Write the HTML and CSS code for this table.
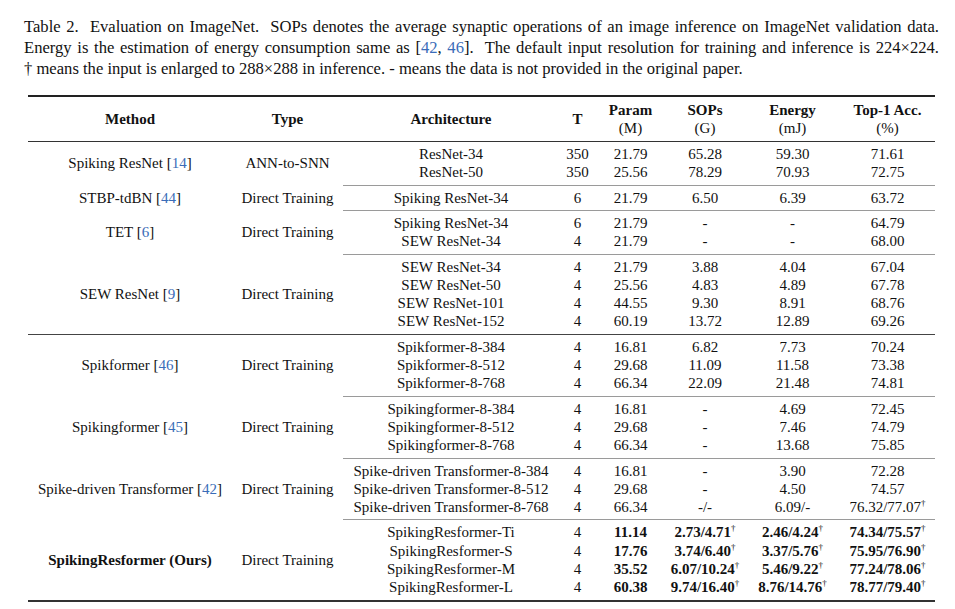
FILE: index.html
```html
<!DOCTYPE html>
<html lang="en">
<head>
    <meta charset="UTF-8">
    <title>Table 2. Evaluation on ImageNet</title>
    <link rel="stylesheet" href="styles.css">
</head>
<body>
    <div class="page">
        <div class="caption">
            <p class="caption-main">Table 2.&nbsp; Evaluation on ImageNet.&nbsp; SOPs denotes the average synaptic operations of an image inference on ImageNet validation data. Energy is the estimation of energy consumption same as [<a href="#">42</a>,&nbsp;<a href="#">46</a>].&nbsp; The default input resolution for training and inference is 224&times;224.</p>
            <p class="caption-note">&dagger; means the input is enlarged to 288&times;288 in inference. - means the data is not provided in the original paper.</p>
        </div>

        <table class="results">
            <colgroup>
                <col class="c-method">
                <col class="c-type">
                <col class="c-arch">
                <col class="c-t">
                <col class="c-param">
                <col class="c-sops">
                <col class="c-energy">
                <col class="c-acc">
            </colgroup>
            <thead>
                <tr>
                    <th>Method</th>
                    <th>Type</th>
                    <th>Architecture</th>
                    <th>T</th>
                    <th>Param<br><span class="unit">(M)</span></th>
                    <th>SOPs<br><span class="unit">(G)</span></th>
                    <th>Energy<br><span class="unit">(mJ)</span></th>
                    <th>Top-1 Acc.<br><span class="unit">(%)</span></th>
                </tr>
            </thead>
            <tbody>
                <tr>
                    <td>Spiking ResNet [<a href="#">14</a>]</td>
                    <td>ANN-to-SNN</td>
                    <td>ResNet-34<br>ResNet-50</td>
                    <td>350<br>350</td>
                    <td>21.79<br>25.56</td>
                    <td>65.28<br>78.29</td>
                    <td>59.30<br>70.93</td>
                    <td>71.61<br>72.75</td>
                </tr>
                <tr class="sub">
                    <td>STBP-tdBN [<a href="#">44</a>]</td>
                    <td>Direct Training</td>
                    <td>Spiking ResNet-34</td>
                    <td>6</td>
                    <td>21.79</td>
                    <td>6.50</td>
                    <td>6.39</td>
                    <td>63.72</td>
                </tr>
                <tr class="sub">
                    <td>TET [<a href="#">6</a>]</td>
                    <td>Direct Training</td>
                    <td>Spiking ResNet-34<br>SEW ResNet-34</td>
                    <td>6<br>4</td>
                    <td>21.79<br>21.79</td>
                    <td>-<br>-</td>
                    <td>-<br>-</td>
                    <td>64.79<br>68.00</td>
                </tr>
                <tr class="sub">
                    <td>SEW ResNet [<a href="#">9</a>]</td>
                    <td>Direct Training</td>
                    <td>SEW ResNet-34<br>SEW ResNet-50<br>SEW ResNet-101<br>SEW ResNet-152</td>
                    <td>4<br>4<br>4<br>4</td>
                    <td>21.79<br>25.56<br>44.55<br>60.19</td>
                    <td>3.88<br>4.83<br>9.30<br>13.72</td>
                    <td>4.04<br>4.89<br>8.91<br>12.89</td>
                    <td>67.04<br>67.78<br>68.76<br>69.26</td>
                </tr>
                <tr class="section">
                    <td>Spikformer [<a href="#">46</a>]</td>
                    <td>Direct Training</td>
                    <td>Spikformer-8-384<br>Spikformer-8-512<br>Spikformer-8-768</td>
                    <td>4<br>4<br>4</td>
                    <td>16.81<br>29.68<br>66.34</td>
                    <td>6.82<br>11.09<br>22.09</td>
                    <td>7.73<br>11.58<br>21.48</td>
                    <td>70.24<br>73.38<br>74.81</td>
                </tr>
                <tr class="sub">
                    <td>Spikingformer [<a href="#">45</a>]</td>
                    <td>Direct Training</td>
                    <td>Spikingformer-8-384<br>Spikingformer-8-512<br>Spikingformer-8-768</td>
                    <td>4<br>4<br>4</td>
                    <td>16.81<br>29.68<br>66.34</td>
                    <td>-<br>-<br>-</td>
                    <td>4.69<br>7.46<br>13.68</td>
                    <td>72.45<br>74.79<br>75.85</td>
                </tr>
                <tr class="sub">
                    <td>Spike-driven Transformer [<a href="#">42</a>]</td>
                    <td>Direct Training</td>
                    <td>Spike-driven Transformer-8-384<br>Spike-driven Transformer-8-512<br>Spike-driven Transformer-8-768</td>
                    <td>4<br>4<br>4</td>
                    <td>16.81<br>29.68<br>66.34</td>
                    <td>-<br>-<br>-/-</td>
                    <td>3.90<br>4.50<br>6.09/-</td>
                    <td>72.28<br>74.57<br>76.32/77.07<sup>&dagger;</sup></td>
                </tr>
                <tr class="sub">
                    <td><b>SpikingResformer (Ours)</b></td>
                    <td>Direct Training</td>
                    <td>SpikingResformer-Ti<br>SpikingResformer-S<br>SpikingResformer-M<br>SpikingResformer-L</td>
                    <td>4<br>4<br>4<br>4</td>
                    <td class="best">11.14<br>17.76<br>35.52<br>60.38</td>
                    <td class="best">2.73/4.71<sup>&dagger;</sup><br>3.74/6.40<sup>&dagger;</sup><br>6.07/10.24<sup>&dagger;</sup><br>9.74/16.40<sup>&dagger;</sup></td>
                    <td class="best">2.46/4.24<sup>&dagger;</sup><br>3.37/5.76<sup>&dagger;</sup><br>5.46/9.22<sup>&dagger;</sup><br>8.76/14.76<sup>&dagger;</sup></td>
                    <td class="best">74.34/75.57<sup>&dagger;</sup><br>75.95/76.90<sup>&dagger;</sup><br>77.24/78.06<sup>&dagger;</sup><br>78.77/79.40<sup>&dagger;</sup></td>
                </tr>
            </tbody>
        </table>
    </div>
</body>
</html>
```

FILE: styles.css
```css
body {
    margin: 0;
    background: #fff;
    color: #111;
    font-family: "Liberation Serif", "Times New Roman", serif;
}
.page {
    width: 915px;
    padding: 16px 0 0 24px;
}
.caption {
    font-size: 16.6px;
    line-height: 21px;
}
.caption p {
    margin: 0;
}
.caption-main {
    text-align: justify;
    text-align-last: justify;
}
a {
    color: #3a6cb8;
    text-decoration: none;
}
.results {
    width: 907px;
    margin: 16px 0 0 4px;
    border-collapse: collapse;
    table-layout: fixed;
    font-size: 15px;
    line-height: 18.3px;
    text-align: center;
    border-top: 2px solid #222;
    border-bottom: 2px solid #333;
}
.c-method { width: 204px; }
.c-type { width: 111px; }
.c-arch { width: 216px; }
.c-t { width: 37px; }
.c-param { width: 69px; }
.c-sops { width: 80px; }
.c-energy { width: 95px; }
.c-acc { width: 95px; }
.results th {
    font-weight: bold;
    padding: 4px 0 3.5px;
    border-bottom: 1.3px solid #333;
    vertical-align: middle;
}
.results th .unit {
    font-weight: normal;
}
.results td {
    padding: 3px 0 3px;
    vertical-align: middle;
    white-space: nowrap;
}
.results tr.sub td:nth-child(n+3) {
    border-top: 1px solid #9a9a9a;
}
.results tr.section td {
    border-top: 1.3px solid #444;
}
.results td.best {
    font-weight: bold;
}
sup {
    font-size: 9px;
    line-height: 0;
    vertical-align: 6px;
    font-weight: normal;
}
```
